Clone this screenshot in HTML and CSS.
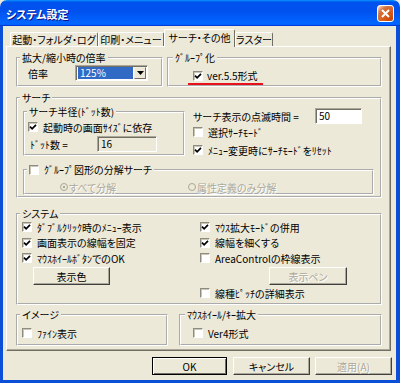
FILE: index.html
```html
<!DOCTYPE html>
<html lang="ja">
<head>
    <meta charset="UTF-8">
    <meta name="viewport" content="width=device-width, initial-scale=1.0">
    <title>システム設定</title>
    <link rel="stylesheet" href="styles.css">
</head>
<body>

<div class="window">
    <div class="titlebar">
        <span class="title">システム設定</span>
        <span class="close-btn">
            <svg width="9" height="9" viewBox="0 0 9 9"><path d="M1 1L8 8M8 1L1 8" stroke="#fff" stroke-width="2" fill="none"/></svg>
        </span>
    </div>

    <div class="frame">
        <div class="tabs">
            <div class="tab tab-1">起動・フォルダ・ログ</div>
            <div class="tab tab-2">印刷・メニュー</div>
            <div class="tab tab-3 active">サーチ・その他</div>
            <div class="tab tab-4">ラスター</div>
        </div>

        <div class="panel">
            <!-- top row: zoom rate / grouping -->
            <div class="row-top">
                <div class="group g-scale">
                    <span class="legend">拡大/縮小時の倍率</span>
                    <div class="field">
                        <span class="lbl-rate">倍率</span>
                        <div class="combo">
                            <span class="combo-val">125%</span>
                            <span class="combo-btn">
                                <svg width="7" height="4" viewBox="0 0 7 4"><path d="M0 0H7L3.5 4Z" fill="#000"/></svg>
                            </span>
                        </div>
                    </div>
                </div>
                <div class="group g-group">
                    <span class="legend legend-r">ｸﾞﾙｰﾌﾟ化</span>
                    <div class="marked">
                        <span class="box"><svg width="8" height="8" viewBox="0 0 8 8"><path d="M1 3.6L3.1 5.8L7 1.8" stroke="#000" stroke-width="1.7" fill="none"/></svg></span>
                        <span>ver.5.5形式</span>
                    </div>
                </div>
            </div>

            <!-- search -->
            <div class="group g-search">
                <span class="legend">サーチ</span>
                <div class="search-top">
                    <div class="group g-radius">
                        <span class="legend">サーチ半径(ﾄﾞｯﾄ数)</span>
                        <label class="check chk-size">
                            <span class="box"><svg width="8" height="8" viewBox="0 0 8 8"><path d="M1 3.6L3.1 5.8L7 1.8" stroke="#000" stroke-width="1.7" fill="none"/></svg></span>
                            起動時の画面ｻｲｽﾞに依存
                        </label>
                        <div class="field dot-row">
                            <span class="lbl-dot">ﾄﾞｯﾄ数 =</span>
                            <span class="textbox readonly tb-dot">16</span>
                        </div>
                    </div>
                    <div class="search-right">
                        <div class="field blink-row">
                            <span class="lbl-blink">サーチ表示の点滅時間 =</span>
                            <span class="textbox tb-blink">50</span>
                        </div>
                        <label class="check">
                            <span class="box"></span>
                            選択ｻｰﾁﾓｰﾄﾞ
                        </label>
                        <label class="check reset-row">
                            <span class="box"><svg width="8" height="8" viewBox="0 0 8 8"><path d="M1 3.6L3.1 5.8L7 1.8" stroke="#000" stroke-width="1.7" fill="none"/></svg></span>
                            ﾒﾆｭｰ変更時にｻｰﾁﾓｰﾄﾞをﾘｾｯﾄ
                        </label>
                    </div>
                </div>
                <div class="group g-split">
                    <label class="legend legend-check">
                        <span class="box"></span>
                        ｸﾞﾙｰﾌﾟ図形の分解サーチ
                    </label>
                    <div class="radio-row">
                        <span class="radio-item disabled first"><span class="radio on"></span>すべて分解</span>
                        <span class="radio-item disabled"><span class="radio"></span>属性定義のみ分解</span>
                    </div>
                </div>
            </div>

            <!-- system -->
            <div class="group g-system">
                <span class="legend">システム</span>
                <div class="sys-col sys-left">
                    <label class="check">
                        <span class="box"><svg width="8" height="8" viewBox="0 0 8 8"><path d="M1 3.6L3.1 5.8L7 1.8" stroke="#000" stroke-width="1.7" fill="none"/></svg></span>
                        ﾀﾞﾌﾞﾙｸﾘｯｸ時のﾒﾆｭｰ表示
                    </label>
                    <label class="check short">
                        <span class="box"><svg width="8" height="8" viewBox="0 0 8 8"><path d="M1 3.6L3.1 5.8L7 1.8" stroke="#000" stroke-width="1.7" fill="none"/></svg></span>
                        画面表示の線幅を固定
                    </label>
                    <label class="check">
                        <span class="box"><svg width="8" height="8" viewBox="0 0 8 8"><path d="M1 3.6L3.1 5.8L7 1.8" stroke="#000" stroke-width="1.7" fill="none"/></svg></span>
                        ﾏｳｽﾎｲｰﾙﾎﾞﾀﾝでのOK
                    </label>
                    <span class="btn btn-color">表示色</span>
                </div>
                <div class="sys-col sys-right">
                    <label class="check">
                        <span class="box"><svg width="8" height="8" viewBox="0 0 8 8"><path d="M1 3.6L3.1 5.8L7 1.8" stroke="#000" stroke-width="1.7" fill="none"/></svg></span>
                        ﾏｳｽ拡大ﾓｰﾄﾞの併用
                    </label>
                    <label class="check short">
                        <span class="box"><svg width="8" height="8" viewBox="0 0 8 8"><path d="M1 3.6L3.1 5.8L7 1.8" stroke="#000" stroke-width="1.7" fill="none"/></svg></span>
                        線幅を細くする
                    </label>
                    <label class="check">
                        <span class="box"></span>
                        AreaControlの枠線表示
                    </label>
                    <span class="btn btn-pen disabled">表示ペン</span>
                    <label class="check">
                        <span class="box"></span>
                        線種ﾋﾟｯﾁの詳細表示
                    </label>
                </div>
            </div>

            <!-- bottom row -->
            <div class="row-bottom">
                <div class="group g-image">
                    <span class="legend">イメージ</span>
                    <label class="check">
                        <span class="box"></span>
                        ﾌｧｲﾝ表示
                    </label>
                </div>
                <div class="group g-wheel">
                    <span class="legend legend-r">ﾏｳｽﾎｲｰﾙ/ｷｰ拡大</span>
                    <label class="check">
                        <span class="box"></span>
                        Ver4形式
                    </label>
                </div>
            </div>
        </div>

        <div class="buttons">
            <span class="btn btn-ok default">OK</span>
            <span class="btn btn-cancel">キャンセル</span>
            <span class="btn btn-apply disabled">適用(A)</span>
        </div>
    </div>
</div>

</body>
</html>
```

FILE: styles.css
```css
* {
    box-sizing: border-box;
}
body {
    margin: 0;
    background: #fff;
    font-family: "Noto Sans CJK JP", sans-serif;
    font-size: 10px;
    font-feature-settings: "palt";
    color: #000;
}
.window {
    width: 400px;
    height: 383px;
    display: flex;
    flex-direction: column;
    background: #ECE9D8;
}

/* title bar */
.titlebar {
    height: 26px;
    flex: none;
    display: flex;
    align-items: center;
    justify-content: space-between;
    padding: 1px 6px 0 6px;
    border-radius: 7px 7px 0 0;
    background: linear-gradient(to bottom, #0997FF 0%, #0053EE 8%, #0050EE 40%, #0066FF 88%, #0066FF 93%, #005BFF 95%, #003DD7 96%, #003DD7 100%);
}
.title {
    color: #fff;
    font-weight: bold;
    font-size: 11px;
    line-height: 14px;
    text-shadow: 1px 1px #0F1089;
}
.close-btn {
    width: 17px;
    height: 17px;
    border: 1px solid #fff;
    border-radius: 3px;
    display: flex;
    align-items: center;
    justify-content: center;
    background: radial-gradient(circle at 85% 85%, #CC4600 0%, #DC6527 55%, #CD7546 70%, #FFCCB2 92%, #fff 100%);
}

/* window body */
.frame {
    flex: 1;
    display: flex;
    flex-direction: column;
    border: solid #0B4FD8;
    border-width: 0 4px 3px 3px;
    padding: 0 4px 5px 0;
}
.tabs {
    display: flex;
    align-items: flex-end;
    height: 17px;
    margin: 4px 0 -1px 7px;
    position: relative;
    z-index: 1;
}
.tab {
    height: 14px;
    margin-bottom: 1px;
    display: flex;
    align-items: center;
    justify-content: center;
    line-height: 12px;
    white-space: nowrap;
    background: #ECE9D8;
    border: 1px solid;
    border-color: #fff #716F64 transparent #fff;
    border-bottom: none;
    border-radius: 2px 2px 0 0;
}
.tab-1 { width: 88px; }
.tab-2 { width: 66px; }
.tab-3 { width: 71px; }
.tab-4 { width: 38px; }
.tab.active {
    height: 18px;
    margin-bottom: 0;
    padding-bottom: 2px;
}

.panel {
    height: 305px;
    margin: 0 1px 0 3px;
    border: 1px solid;
    border-color: #fff #716F64 #716F64 #fff;
    box-shadow: inset -1px -1px #ACA899;
    padding: 10px 8px 0 9px;
    display: flex;
    flex-direction: column;
}

/* group boxes */
.group {
    position: relative;
    border: 2px groove #fff;
}
.legend {
    position: absolute;
    top: -7px;
    left: 2px;
    padding: 0 2px;
    line-height: 12px;
    white-space: nowrap;
    background: #ECE9D8;
}
.legend-r {
    left: 4px;
}

.row-top {
    display: flex;
    gap: 4px;
    height: 30px;
}
.g-scale {
    width: 147px;
    padding: 6px 0 0 10px;
}
.g-group {
    flex: 1;
    padding: 9px 0 0 19px;
}
.field {
    display: flex;
    align-items: center;
    height: 16px;
    white-space: nowrap;
}
.lbl-rate {
    width: 47px;
}
.combo {
    width: 73px;
    height: 16px;
    display: flex;
    align-items: center;
    background: #fff;
    border: 1px solid;
    border-color: #ACA899 #fff #fff #ACA899;
    box-shadow: inset 1px 1px #716F64;
    padding: 1px 1px 1px 2px;
}
.combo-val {
    flex: 1;
    height: 12px;
    line-height: 12px;
    padding-left: 2px;
    color: #fff;
    background: #316AC5;
}
.combo-btn {
    width: 12px;
    height: 12px;
    margin-left: 1px;
    display: flex;
    align-items: center;
    justify-content: center;
    background: #ECE9D8;
    border: 1px solid;
    border-color: #F1EFE2 #716F64 #716F64 #F1EFE2;
}
.marked {
    display: inline-flex;
    align-items: center;
    gap: 4px;
    height: 15px;
    padding: 0 5px 1px 5px;
    line-height: 12px;
    border-bottom: 2px solid #E8101A;
}

/* checkboxes, radios, text boxes */
.check {
    display: flex;
    align-items: center;
    gap: 5px;
    height: 16px;
    white-space: nowrap;
}
.check.short {
    height: 15px;
}
.box {
    width: 10px;
    height: 10px;
    flex: none;
    display: flex;
    align-items: center;
    justify-content: center;
    background: #fff;
    border: 1px solid;
    border-color: #8E8C80 #fff #fff #8E8C80;
    box-shadow: inset 1px 1px #C9C6B6;
}
.radio {
    width: 8px;
    height: 8px;
    flex: none;
    display: flex;
    align-items: center;
    justify-content: center;
    border: 1px solid #ACA899;
    border-radius: 50%;
    background: #ECE9D8;
}
.radio.on::after {
    content: "";
    width: 2px;
    height: 2px;
    background: #ACA899;
}
.textbox {
    height: 16px;
    padding-left: 3px;
    line-height: 14px;
    background: #fff;
    border: 1px solid;
    border-color: #ACA899 #fff #fff #ACA899;
    box-shadow: inset 1px 1px #716F64;
}
.textbox.readonly {
    background: #ECE9D8;
}
.disabled {
    color: #ACA899;
    text-shadow: 1px 1px #fff;
}

/* search */
.g-search {
    height: 101px;
    margin-top: 10px;
    padding: 9px 6px 1px 5px;
}
.search-top {
    display: flex;
    height: 50px;
}
.g-radius {
    width: 162px;
    height: 45px;
    margin-top: 3px;
    padding: 4px 0 0 3px;
}
.chk-size {
    margin-top: 2px;
}
.dot-row {
    margin-top: 1px;
    padding-left: 2px;
}
.lbl-dot {
    width: 67px;
}
.tb-dot {
    width: 60px;
}
.search-right {
    flex: 1;
    margin-left: 8px;
    display: flex;
    flex-direction: column;
}
.lbl-blink {
    width: 122px;
}
.tb-blink {
    width: 47px;
}
.reset-row {
    margin-top: 2px;
}
.g-split {
    height: 26px;
    margin-top: 11px;
    padding: 10px 0 0 35px;
}
.legend-check {
    display: flex;
    align-items: center;
    gap: 5px;
}
.radio-row {
    display: flex;
    height: 12px;
    align-items: center;
    white-space: nowrap;
}
.radio-item {
    display: flex;
    align-items: center;
    gap: 1px;
}
.radio-item.first {
    width: 128px;
}

/* system */
.g-system {
    height: 92px;
    margin-top: 15px;
    padding: 4px 0 0 4px;
    display: flex;
}
.sys-col {
    display: flex;
    flex-direction: column;
}
.sys-left {
    width: 178px;
}
.btn {
    height: 18px;
    display: flex;
    align-items: center;
    justify-content: center;
    white-space: nowrap;
    background: #ECE9D8;
    border: 1px solid;
    border-color: #fff #404040 #404040 #fff;
    box-shadow: inset -1px -1px #ACA899;
}
.btn.default {
    border-color: #000;
    box-shadow: inset 1px 1px #fff, inset -1px -1px #716F64;
}
.btn-color {
    width: 77px;
    margin: 1px 0 0 11px;
}
.btn-pen {
    width: 78px;
    margin: 1px 0 0 69px;
}

/* bottom row */
.row-bottom {
    display: flex;
    gap: 11px;
    height: 32px;
    margin-top: 9px;
}
.g-image {
    width: 152px;
    padding: 9px 0 0 4px;
}
.g-wheel {
    flex: 1;
    padding: 9px 0 0 12px;
}

/* dialog buttons */
.buttons {
    display: flex;
    justify-content: flex-end;
    margin-top: 6px;
    height: 18px;
}
.btn-ok {
    width: 75px;
    margin-right: 6px;
}
.btn-cancel {
    width: 77px;
    margin-right: 5px;
}
.btn-apply {
    width: 77px;
}
```
